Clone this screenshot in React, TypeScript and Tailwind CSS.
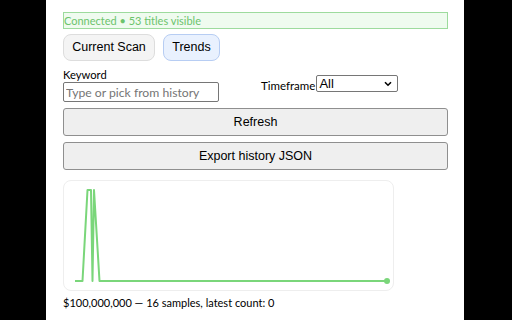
import React from "react";

const ui = { fontFamily: 'Lato, "Noto Sans", sans-serif' };
const arial = { fontFamily: '"Liberation Sans", Arial, sans-serif' };

export default function App() {
  const pts = "10,99 17.5,99 22.5,8 26,8 27.5,99 29,8 34.5,99 322,99";
  return (
    <div className="w-[512px] h-[320px] bg-black flex overflow-hidden">
      <div className="ml-[46px] w-[418px] h-full bg-white pl-[17px] pr-[16px] pt-[12px] flex flex-col">
        <div
          className="h-[17px] border border-[#9ddb9d] bg-[#effbef] text-[11px] leading-[15px] text-[#6cc36c]"
          style={ui}
        >
          Connected • 53 titles visible
        </div>
        <div className="mt-[5px] flex gap-[8px]" style={arial}>
          <button className="h-[27px] w-[92px] rounded-[8px] border border-[#dddddd] bg-[#f4f4f4] text-[12.5px] text-black">
            Current Scan
          </button>
          <button className="h-[27px] w-[57px] rounded-[8px] border border-[#b7cdf3] bg-[#e9f1fe] text-[12.5px] text-black">
            Trends
          </button>
        </div>
        <div className="mt-[7px] flex items-center">
          <div className="flex flex-col">
            <label className="text-[11.2px] leading-[13px] text-black" style={ui}>
              Keyword
            </label>
            <input
              className="mt-[1px] w-[156px] h-[20px] border border-[#767676] rounded-[2px] px-[2px] text-[12.2px] placeholder:text-[#757575] outline-none"
              style={ui}
              placeholder="Type or pick from history"
            />
          </div>
          <span className="ml-[42px] mt-[1px] text-[11.5px] text-black" style={ui}>
            Timeframe
          </span>
          <div className="relative ml-[1px] mt-[-3px]">
            <select
              className="appearance-none block w-[82px] h-[17px] border border-[#767676] rounded-[2px] pl-[2px] py-0 text-[13px] leading-[15px] text-black bg-white outline-none"
              style={arial}
              defaultValue="All"
            >
              <option>All</option>
            </select>
            <svg
              className="absolute right-[6px] top-[6px] pointer-events-none"
              width="8"
              height="6"
              viewBox="0 0 8 6"
            >
              <path d="M1 1.2 L4 4.2 L7 1.2" fill="none" stroke="#000" strokeWidth="1.6" />
            </svg>
          </div>
        </div>
        <button
          className="mt-[6px] w-full h-[28px] border border-[#8f8f8f] rounded-[3px] bg-[#efefef] text-[12.5px] text-black"
          style={arial}
        >
          Refresh
        </button>
        <button
          className="mt-[6px] w-full h-[28px] border border-[#8f8f8f] rounded-[3px] bg-[#efefef] text-[12.5px] text-black"
          style={arial}
        >
          Export history JSON
        </button>
        <div className="mt-[10px] w-[331px] h-[111px] border border-[#eeeeee] rounded-[8px]">
          <svg width="331" height="111" viewBox="-1 -1 331 111" className="block">
            <polyline points={pts} fill="none" stroke="#7ad67a" strokeWidth="2" strokeLinejoin="round" />
            <circle cx="322" cy="99" r="3" fill="#7ad67a" />
          </svg>
        </div>
        <div className="mt-[4px] text-[11px] leading-[16px] text-black" style={ui}>
          $100,000,000 — 16 samples, latest count: 0
        </div>
      </div>
    </div>
  );
}
